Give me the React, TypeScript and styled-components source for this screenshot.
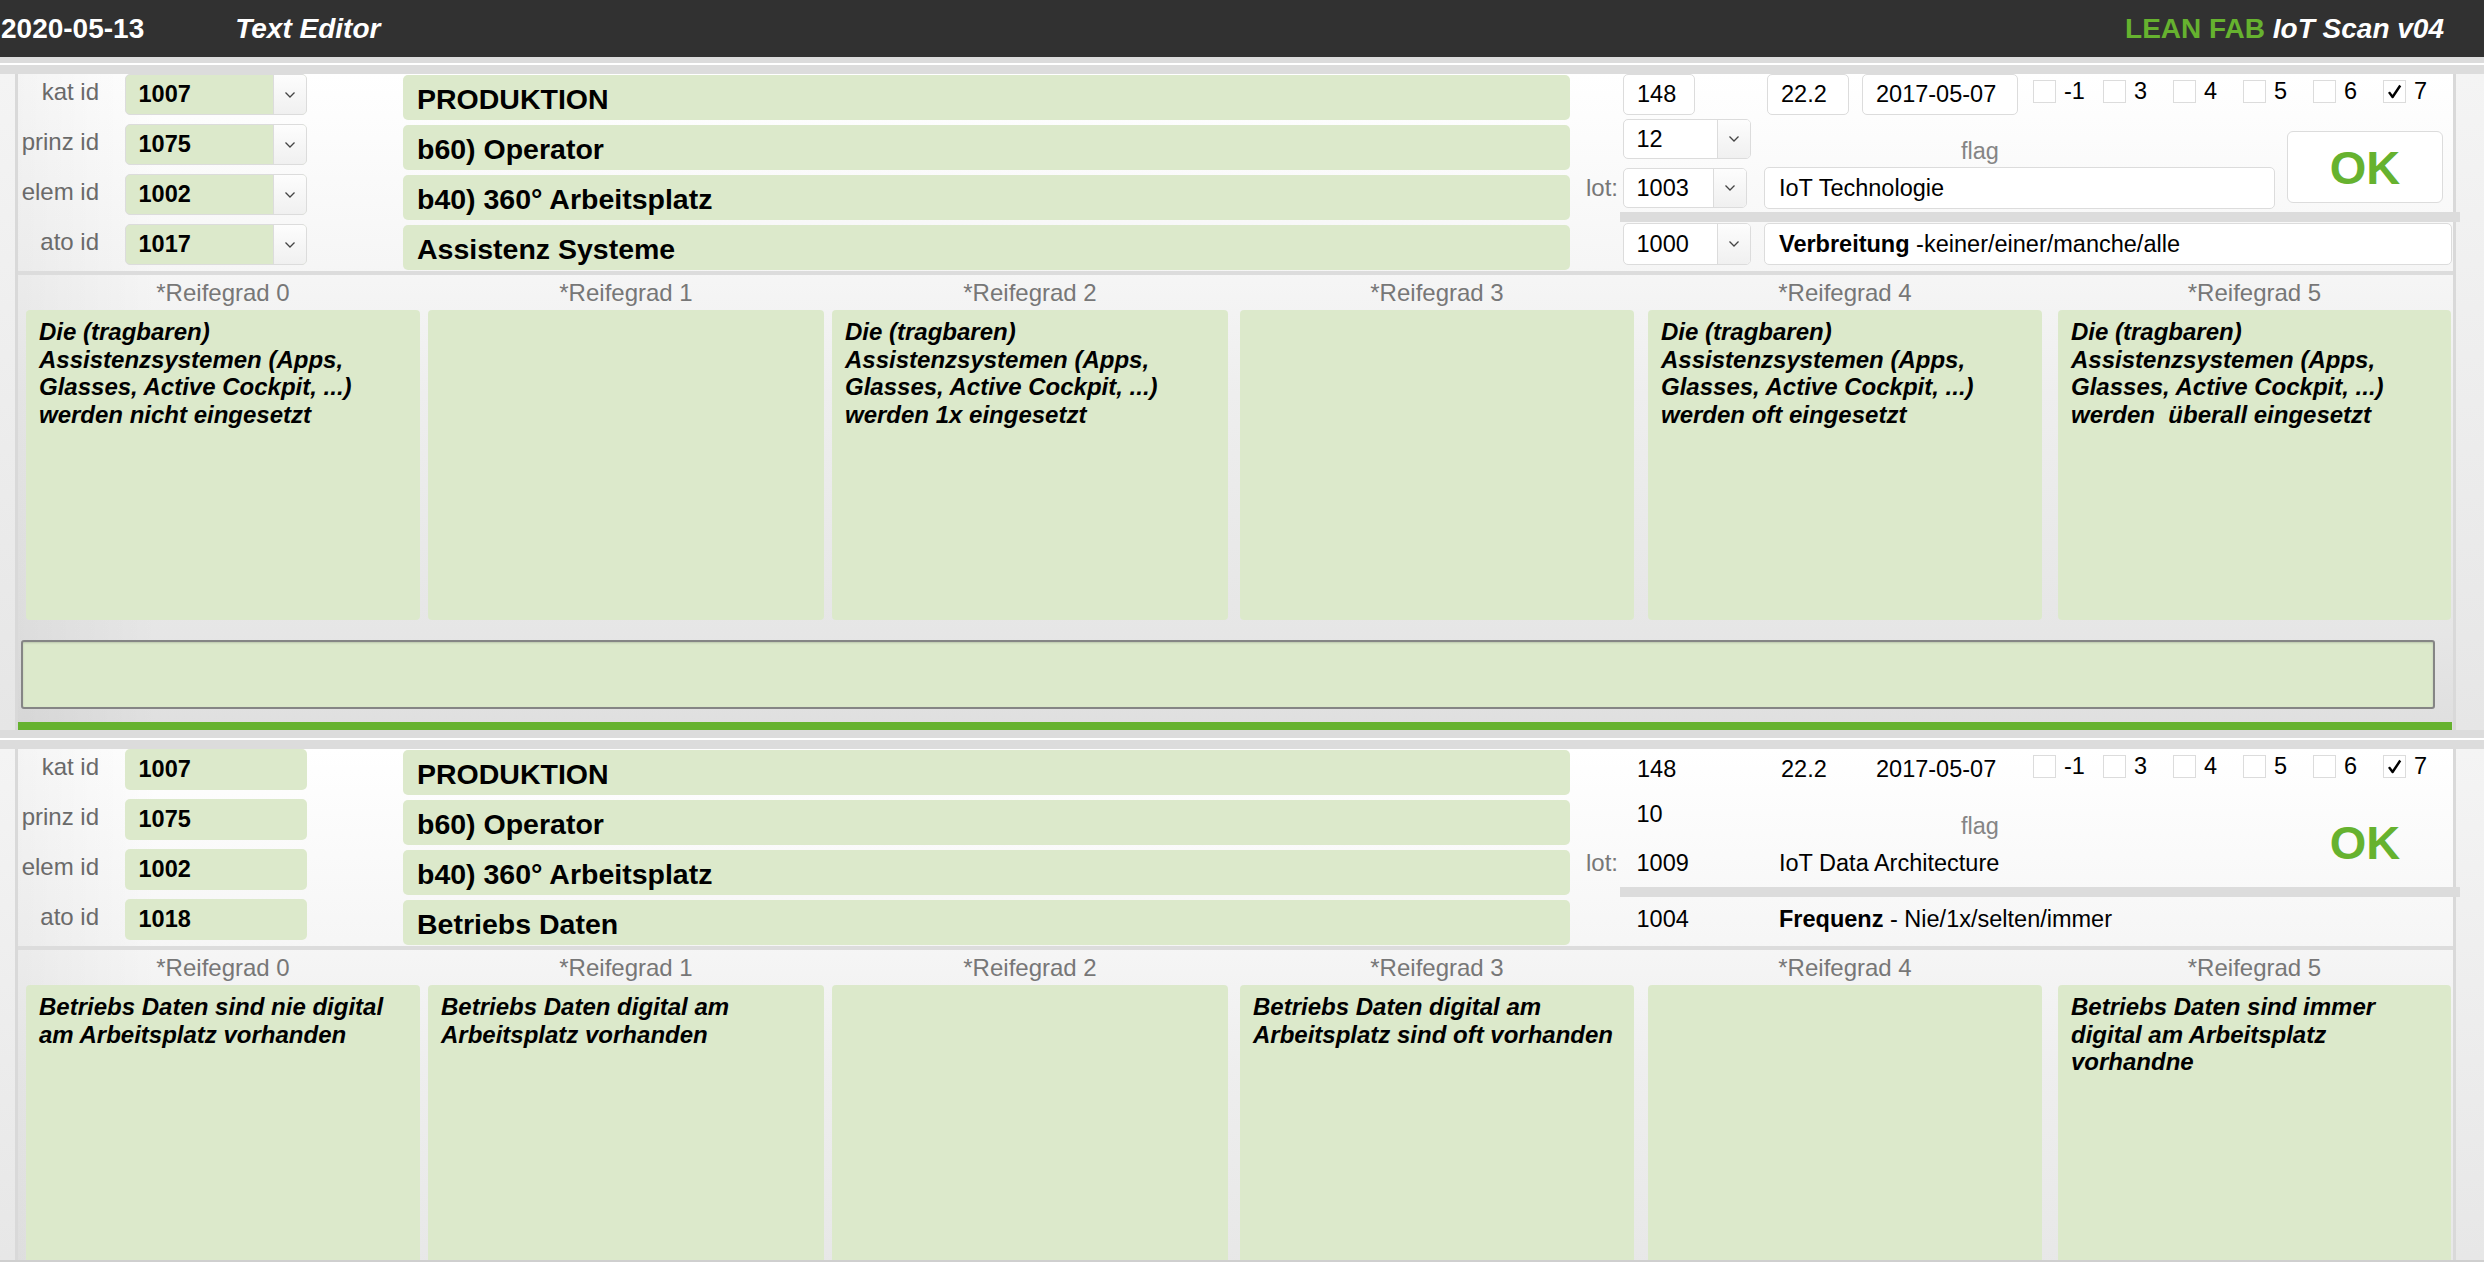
import React from 'react'
import styled, { createGlobalStyle } from 'styled-components'

const GREEN = '#66b22f'
const FIELD_GREEN = '#dce9cb'
const BAND = '#dcdcdc'
const LINE = '#dcdcdc'

type Grade = string

interface SectionData {
  ids: { label: string; value: string }[]
  titles: string[]
  amount: string
  factor: string
  date: string
  level: string
  lot: string
  flag: string
  spread: string
  spreadBold: string
  spreadRest: string
  grades: Grade[]
}

const CHECKS = ['-1', '3', '4', '5', '6', '7']
const GRADE_WIDTHS = [394, 396, 396, 394, 394, 393]
const GRADE_GAPS = [8, 8, 8, 12, 14, 16]

const SECTIONS: SectionData[] = [
  {
    ids: [
      { label: 'kat id', value: '1007' },
      { label: 'prinz id', value: '1075' },
      { label: 'elem id', value: '1002' },
      { label: 'ato id', value: '1017' },
    ],
    titles: ['PRODUKTION', 'b60) Operator', 'b40) 360° Arbeitsplatz', 'Assistenz Systeme'],
    amount: '148',
    factor: '22.2',
    date: '2017-05-07',
    level: '12',
    lot: '1003',
    flag: 'IoT Technologie',
    spread: '1000',
    spreadBold: 'Verbreitung',
    spreadRest: ' -keiner/einer/manche/alle',
    grades: [
      'Die (tragbaren)\nAssistenzsystemen (Apps,\nGlasses, Active Cockpit, ...)\nwerden nicht eingesetzt',
      '',
      'Die (tragbaren)\nAssistenzsystemen (Apps,\nGlasses, Active Cockpit, ...)\nwerden 1x eingesetzt',
      '',
      'Die (tragbaren)\nAssistenzsystemen (Apps,\nGlasses, Active Cockpit, ...)\nwerden oft eingesetzt',
      'Die (tragbaren)\nAssistenzsystemen (Apps,\nGlasses, Active Cockpit, ...)\nwerden  überall eingesetzt',
    ],
  },
  {
    ids: [
      { label: 'kat id', value: '1007' },
      { label: 'prinz id', value: '1075' },
      { label: 'elem id', value: '1002' },
      { label: 'ato id', value: '1018' },
    ],
    titles: ['PRODUKTION', 'b60) Operator', 'b40) 360° Arbeitsplatz', 'Betriebs Daten'],
    amount: '148',
    factor: '22.2',
    date: '2017-05-07',
    level: '10',
    lot: '1009',
    flag: 'IoT Data Architecture',
    spread: '1004',
    spreadBold: 'Frequenz',
    spreadRest: ' - Nie/1x/selten/immer',
    grades: [
      'Betriebs Daten sind nie digital\nam Arbeitsplatz vorhanden',
      'Betriebs Daten digital am\nArbeitsplatz vorhanden',
      '',
      'Betriebs Daten digital am\nArbeitsplatz sind oft vorhanden',
      '',
      'Betriebs Daten sind immer\ndigital am Arbeitsplatz\nvorhandne',
    ],
  },
]

const GlobalStyle = createGlobalStyle`
  html, body {
    margin: 0;
    padding: 0;
    background: #ffffff;
  }

  body {
    font-family: 'Liberation Sans', Arial, Helvetica, sans-serif;
    color: #000;
    overflow: hidden;
  }

  * {
    box-sizing: border-box;
  }
`

const Page = styled('div')`
  width: 2484px;
  height: 1272px;
  display: flex;
  flex-direction: column;
  background: #fff;
`

const Header = styled('header')`
  flex: none;
  height: 57px;
  display: flex;
  align-items: center;
  padding: 0 40px 0 1px;
  background: #313131;
  color: #fff;
  font-size: 28px;
  font-weight: 700;
`

const HeaderTitle = styled('span')`
  margin-left: 91px;
  font-style: italic;
`

const Brand = styled('span')`
  margin-left: auto;
`

const BrandGreen = styled('span')`
  color: ${GREEN};
`

const BrandItalic = styled('span')`
  font-style: italic;
`

const Scroller = styled('main')`
  flex: none;
  height: 1205px;
  overflow: hidden;
  border-bottom: 2px solid #cfcfcf;
  background: #fff;
`

const TopStrip = styled('div')`
  height: 8px;
  background: ${BAND};
  border-bottom: 2px solid #fff;
`

const SectionWrap = styled('section')<{ $edit: boolean }>`
  border-top: 9px solid ${BAND};
  border-bottom: ${({ $edit }) => ($edit ? `8px solid ${BAND}` : 'none')};
  margin-bottom: 2px;
  background: linear-gradient(180deg, #f4f4f4, #e6e6e6);
`

const Panel = styled('div')`
  margin: 0 28px 0 15px;
  border-left: 3px solid #d9d9d9;
  border-right: 3px solid #d9d9d9;
  background:
    linear-gradient(90deg, rgba(0, 0, 0, 0.045), rgba(0, 0, 0, 0) 140px),
    linear-gradient(180deg, #ffffff 0px, #f6f6f6 190px, #eeeeee 320px, #e6e6e6 560px, #dfdfdf 100%);
`

const TopArea = styled('div')`
  height: 197px;
  display: flex;
`

const IdGrid = styled('div')`
  width: 1552px;
  display: grid;
  grid-template-columns: 107px 278px 1167px;
  grid-template-rows: 50px 50px 50px 47px;
`

const RowLabel = styled('div')`
  padding: 4px 26px 0 0;
  text-align: right;
  font-size: 24px;
  line-height: 27px;
  color: #6a6a6a;
  white-space: nowrap;
`

const SelectBox = styled('div')<{ $w: number; $h?: number; $green?: boolean; $plain?: boolean }>`
  width: ${({ $w }) => $w}px;
  height: ${({ $h }) => $h ?? 41}px;
  display: flex;
  border-radius: 5px;
  overflow: hidden;
  border: 1.5px solid ${({ $plain }) => ($plain ? 'transparent' : '#dcdcdc')};
  background: ${({ $green, $plain }) => ($green ? FIELD_GREEN : $plain ? 'transparent' : '#fff')};
`

const SelectValue = styled('div')<{ $bold?: boolean }>`
  flex: 1;
  display: flex;
  align-items: center;
  padding-left: 12.5px;
  font-size: 23.5px;
  font-weight: ${({ $bold }) => ($bold ? 700 : 400)};
  white-space: nowrap;
`

const SelectArrow = styled('div')`
  width: 33px;
  flex: none;
  display: flex;
  align-items: center;
  justify-content: center;
  border-left: 1.5px solid #dcdcdc;
  background: linear-gradient(180deg, #fdfdfd, #f0f0f0);
`

const TitleBox = styled('div')`
  height: 45px;
  margin-top: 1px;
  display: flex;
  align-items: center;
  padding: 3px 0 0 14px;
  border-radius: 5px;
  background: ${FIELD_GREEN};
  font-size: 28.5px;
  font-weight: 700;
  white-space: nowrap;
`

const SideBlock = styled('div')`
  width: 883px;
  display: flex;
  flex-direction: column;
`

const SideTopRow = styled('div')`
  height: 45px;
  display: flex;
  align-items: flex-start;
  padding-left: 53px;
`

const Field = styled('div')<{ $w: number; $h?: number; $ml?: number; $plain?: boolean }>`
  width: ${({ $w }) => $w}px;
  height: ${({ $h }) => $h ?? 41}px;
  margin-left: ${({ $ml }) => $ml ?? 0}px;
  display: flex;
  align-items: center;
  padding-left: 13px;
  border-radius: 5px;
  border: 1.5px solid ${({ $plain }) => ($plain ? 'transparent' : '#dcdcdc')};
  background: ${({ $plain }) => ($plain ? 'transparent' : '#fff')};
  font-size: 23.5px;
  white-space: pre;
  overflow: hidden;
`

const FieldText = styled('span')`
  white-space: pre;
`

const Bold = styled('b')`
  font-weight: 700;
`

const CheckGroup = styled('div')`
  display: flex;
  margin: 4px 0 0 15px;
`

const CheckItem = styled('div')`
  width: 70px;
  display: flex;
  align-items: center;
  gap: 8px;
  font-size: 23.5px;
`

const CheckBox = styled('span')`
  width: 23px;
  height: 23px;
  display: flex;
  align-items: center;
  justify-content: center;
  border: 1.5px solid #dcdcdc;
  background: #fff;
`

const MidGrid = styled('div')`
  display: grid;
  grid-template-columns: 53px 141px 523px 156px 1fr;
  grid-template-rows: 40px 9px 40px;
  padding-bottom: 4px;
`

const FlagLabel = styled('div')`
  grid-column: 3;
  grid-row: 1 / 3;
  align-self: end;
  margin-bottom: 3px;
  padding-left: 197px;
  font-size: 23.5px;
  line-height: 27px;
  color: #858585;
`

const LotLabel = styled('div')`
  grid-column: 1;
  grid-row: 3;
  align-self: center;
  padding-right: 5px;
  text-align: right;
  font-size: 24px;
  color: #777;
`

const GridCell = styled('div')<{ $col: number; $row: number }>`
  grid-column: ${({ $col }) => $col};
  grid-row: ${({ $row }) => $row};
`

const OkButton = styled('div')<{ $plain?: boolean }>`
  grid-column: 4;
  grid-row: 1 / 4;
  height: 72px;
  margin-top: 12px;
  display: flex;
  align-items: center;
  justify-content: center;
  border-radius: 6px;
  border: 1.5px solid ${({ $plain }) => ($plain ? 'transparent' : '#dcdcdc')};
  background: ${({ $plain }) => ($plain ? 'transparent' : '#fff')};
  color: ${GREEN};
  font-size: 47px;
  font-weight: 700;
`

const SideBar = styled('div')`
  width: 840px;
  height: 10px;
  margin-left: 50px;
  background: ${LINE};
`

const SideBottomRow = styled('div')`
  display: flex;
  margin-top: 1px;
  padding-left: 53px;
`

const Divider = styled('div')`
  height: 4px;
  background: ${LINE};
`

const Grades = styled('div')`
  display: flex;
`

const GradeCol = styled('div')<{ $w: number; $ml: number }>`
  width: ${({ $w }) => $w}px;
  margin-left: ${({ $ml }) => $ml}px;
  display: flex;
  flex-direction: column;
`

const GradeLabel = styled('div')`
  height: 35px;
  display: flex;
  align-items: center;
  justify-content: center;
  padding-top: 1px;
  font-size: 24px;
  color: #777;
`

const GradeText = styled('div')`
  height: 310px;
  padding: 8px 13px;
  border-radius: 4px;
  background: ${FIELD_GREEN};
  font-size: 24px;
  line-height: 27.7px;
  font-weight: 700;
  font-style: italic;
  white-space: pre-wrap;
`

const NoteBox = styled('div')`
  height: 69px;
  margin: 20px 18px 0 3px;
  border: 2px solid #858585;
  border-radius: 3px;
  background: ${FIELD_GREEN};
  box-shadow: inset 0 1px 2px rgba(0, 0, 0, 0.15);
`

const GreenBar = styled('div')`
  height: 8px;
  margin: 13px 1px 0 0;
  background: ${GREEN};
`

function Chevron() {
  return (
    <svg width="12" height="8" viewBox="0 0 12 8">
      <path d="M1.5 1.5 L6 6 L10.5 1.5" fill="none" stroke="#444" strokeWidth="1.3" />
    </svg>
  )
}

function CheckMark() {
  return (
    <svg width="17" height="17" viewBox="0 0 16 16">
      <path d="M2.8 8.6 L6.2 13.2 L13.4 2.4" fill="none" stroke="#000" strokeWidth="2.3" strokeLinejoin="round" />
    </svg>
  )
}

interface SelectProps {
  value: string
  width: number
  height?: number
  green?: boolean
  bold?: boolean
  plain?: boolean
  arrow?: boolean
}

function Select({ value, width, height, green, bold, plain, arrow }: SelectProps) {
  return (
    <SelectBox $w={width} $h={height} $green={green} $plain={plain}>
      <SelectValue $bold={bold}>{value}</SelectValue>
      {arrow && (
        <SelectArrow>
          <Chevron />
        </SelectArrow>
      )}
    </SelectBox>
  )
}

function ScanSection({ data, edit }: { data: SectionData; edit: boolean }) {
  const plain = !edit

  return (
    <SectionWrap $edit={edit}>
      <Panel>
        <TopArea>
          <IdGrid>
            {data.ids.map((id, i) => (
              <React.Fragment key={id.label}>
                <RowLabel>{id.label}</RowLabel>
                <div>
                  <Select value={id.value} width={182} green bold arrow={edit} plain={plain} />
                </div>
                <TitleBox>{data.titles[i]}</TitleBox>
              </React.Fragment>
            ))}
          </IdGrid>

          <SideBlock>
            <SideTopRow>
              <Field $w={72} $plain={plain}>{data.amount}</Field>
              <Field $w={82} $ml={72} $plain={plain}>{data.factor}</Field>
              <Field $w={156} $ml={13} $plain={plain}>{data.date}</Field>
              <CheckGroup>
                {CHECKS.map((c) => (
                  <CheckItem key={c}>
                    <CheckBox>{c === '7' && <CheckMark />}</CheckBox>
                    {c}
                  </CheckItem>
                ))}
              </CheckGroup>
            </SideTopRow>

            <MidGrid>
              <GridCell $col={2} $row={1}>
                <Select value={data.level} width={128} height={40} arrow={edit} plain={plain} />
              </GridCell>
              <FlagLabel>flag</FlagLabel>
              <LotLabel>lot:</LotLabel>
              <GridCell $col={2} $row={3}>
                <Select value={data.lot} width={124} height={40} arrow={edit} plain={plain} />
              </GridCell>
              <GridCell $col={3} $row={3}>
                <Field $w={511} $h={42} $plain={plain} style={{ marginTop: -1, paddingLeft: 14 }}>
                  {data.flag}
                </Field>
              </GridCell>
              <OkButton $plain={plain}>OK</OkButton>
            </MidGrid>

            <SideBar />

            <SideBottomRow>
              <Select value={data.spread} width={128} height={42} arrow={edit} plain={plain} />
              <Field $w={688} $h={42} $ml={13} $plain={plain} style={{ paddingLeft: 14 }}>
                <FieldText>
                  <Bold>{data.spreadBold}</Bold>
                  {data.spreadRest}
                </FieldText>
              </Field>
            </SideBottomRow>
          </SideBlock>
        </TopArea>

        <Divider />

        <Grades>
          {data.grades.map((g, i) => (
            <GradeCol key={i} $w={GRADE_WIDTHS[i]} $ml={GRADE_GAPS[i]}>
              <GradeLabel>*Reifegrad {i}</GradeLabel>
              <GradeText>{g}</GradeText>
            </GradeCol>
          ))}
        </Grades>

        {edit && (
          <>
            <NoteBox />
            <GreenBar />
          </>
        )}
      </Panel>
    </SectionWrap>
  )
}

function App() {
  return (
    <>
      <GlobalStyle />
      <Page>
        <Header>
          <span>2020-05-13</span>
          <HeaderTitle>Text Editor</HeaderTitle>
          <Brand>
            <BrandGreen>LEAN FAB</BrandGreen> <BrandItalic>IoT Scan v04</BrandItalic>
          </Brand>
        </Header>

        <Scroller>
          <TopStrip />
          {SECTIONS.map((s, i) => (
            <ScanSection key={i} data={s} edit={i === 0} />
          ))}
        </Scroller>
      </Page>
    </>
  )
}

export default App
